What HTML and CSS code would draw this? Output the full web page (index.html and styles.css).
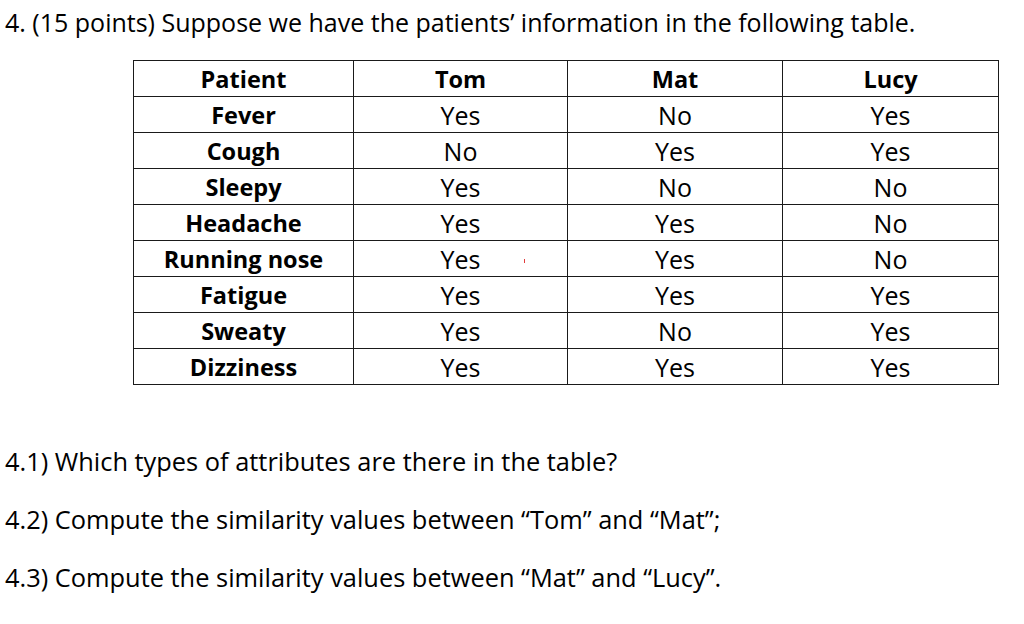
FILE: index.html
```html
<!DOCTYPE html>
<html>
<head>
<meta charset="utf-8">
<link rel="stylesheet" href="styles.css">
</head>
<body>
<div class="page">
  <p class="title">4. (15 points) Suppose we have the patients’ information in the following table.</p>
  <div class="table-wrap">
    <table class="grid">
      <colgroup>
        <col class="c1"><col class="c2"><col class="c3"><col class="c4">
      </colgroup>
      <tr><th>Patient</th><th>Tom</th><th>Mat</th><th>Lucy</th></tr>
      <tr><th>Fever</th><td>Yes</td><td>No</td><td>Yes</td></tr>
      <tr><th>Cough</th><td>No</td><td>Yes</td><td>Yes</td></tr>
      <tr><th>Sleepy</th><td>Yes</td><td>No</td><td>No</td></tr>
      <tr><th>Headache</th><td>Yes</td><td>Yes</td><td>No</td></tr>
      <tr><th>Running nose</th><td class="marked">Yes<span class="tick"></span></td><td>Yes</td><td>No</td></tr>
      <tr><th>Fatigue</th><td>Yes</td><td>Yes</td><td>Yes</td></tr>
      <tr><th>Sweaty</th><td>Yes</td><td>No</td><td>Yes</td></tr>
      <tr><th>Dizziness</th><td>Yes</td><td>Yes</td><td>Yes</td></tr>
    </table>
  </div>
  <div class="questions">
    <p>4.1) Which types of attributes are there in the table?</p>
    <p>4.2) Compute the similarity values between “Tom” and “Mat”;</p>
    <p>4.3) Compute the similarity values between “Mat” and “Lucy”.</p>
  </div>
</div>
</body>
</html>
```

FILE: styles.css
```css
html, body {
  margin: 0;
  padding: 0;
  background: #ffffff;
}
body {
  font-family: "Open Sans", Lato, "Liberation Sans", sans-serif;
  color: #000;
}
.page {
  width: 1024px;
  height: 624px;
  overflow: hidden;
  padding-left: 5px;
  box-sizing: border-box;
}
.title {
  margin: 0;
  padding-top: 6px;
  font-size: 25px;
  line-height: 32px;
}
.table-wrap {
  padding-left: 128px;
  padding-top: 22px;
}
.grid {
  border-collapse: collapse;
  font-size: 25px;
  table-layout: fixed;
  width: 866px;
}
.c1 { width: 220px; }
.c2 { width: 214px; }
.c3 { width: 215px; }
.c4 { width: 216px; }
.grid th, .grid td {
  border: 1.5px solid #1a1a1a;
  height: 35px;
  padding: 1px 0 0 0;
  box-sizing: border-box;
  text-align: center;
  line-height: 34px;
}
.grid th { font-weight: 700; font-size: 23.5px; }
.grid td { font-weight: 400; }
.marked { position: relative; }
.tick {
  position: absolute;
  left: 170px;
  top: 18px;
  width: 1px;
  height: 4px;
  background: #e23b3b;
}
.questions {
  padding-top: 60px;
  font-size: 25.4px;
}
.questions p {
  margin: 0 0 26px 0;
  line-height: 32px;
}
```
